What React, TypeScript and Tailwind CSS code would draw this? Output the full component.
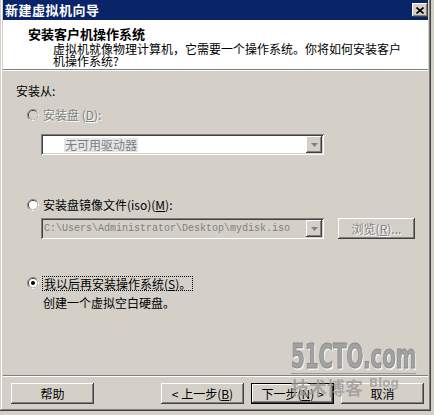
import React from "react";

const raised =
  "shadow-[inset_-1px_-1px_#404040,inset_1px_1px_#ffffff,inset_-2px_-2px_#808080,inset_2px_2px_#d4d0c8]";
const sunken =
  "shadow-[inset_1px_1px_#808080,inset_-1px_-1px_#ffffff,inset_2px_2px_#404040,inset_-2px_-2px_#d4d0c8]";

function Radio({ checked, disabled }: { checked?: boolean; disabled?: boolean }) {
  return (
    <svg width="12" height="12" viewBox="0 0 12 12" className="shrink-0">
      <circle cx="6" cy="6" r="5.5" fill="none" stroke="#808080" />
      <path d="M9.89 2.11 A5.5 5.5 0 0 1 2.11 9.89" fill="none" stroke="#ffffff" />
      <circle cx="6" cy="6" r="4.5" fill="none" stroke="#404040" />
      <path d="M9.18 2.82 A4.5 4.5 0 0 1 2.82 9.18" fill="none" stroke="#d4d0c8" />
      <circle cx="6" cy="6" r="4" fill={disabled ? "#d4d0c8" : "#ffffff"} />
      {checked && <circle cx="6" cy="6" r="2" fill="#000000" />}
    </svg>
  );
}

function Arrow({ disabled }: { disabled?: boolean }) {
  return (
    <div className={`w-[16px] h-[17px] bg-[#d4d0c8] flex items-center justify-center ${raised}`}>
      <svg width="7" height="4" viewBox="0 0 7 4">
        <path d="M0 0 H7 L3.5 4 Z" fill={disabled ? "#808080" : "#000000"} />
      </svg>
    </div>
  );
}

function Btn({ label, def, disabled }: { label: React.ReactNode; def?: boolean; disabled?: boolean }) {
  return (
    <div
      className={`w-[83px] h-[21px] bg-[#d4d0c8] flex items-center justify-center ${
        def ? "border border-black" : ""
      }`}
    >
      <div
        className={`w-full h-full flex items-center justify-center ${raised} ${
          disabled ? "text-[#808080] [text-shadow:1px_1px_0_#ffffff]" : "text-black"
        }`}
      >
        {label}
      </div>
    </div>
  );
}

export default function App() {
  return (
    <div className="w-[434px] h-[415px] bg-[#d4d0c8] relative overflow-hidden font-['Noto_Sans_CJK_SC',sans-serif] text-[12px] leading-[14px] text-black">
      <div
        className={`-mt-[3px] w-[431px] h-[414px] p-[3px] bg-[#d4d0c8] flex flex-col shadow-[inset_-1px_-1px_#404040,inset_1px_1px_#d4d0c8,inset_-2px_-2px_#808080,inset_2px_2px_#ffffff]`}
      >
        {/* title bar */}
        <div className="h-[20px] bg-[#0a246a] flex items-center justify-between pl-[2px] pr-[0px]">
          <span className="text-white font-bold text-[13px] leading-[16px] tracking-[0.5px]">新建虚拟机向导</span>
          <div className={`w-[16px] h-[14px] bg-[#d4d0c8] flex items-center justify-center ${raised}`}>
            <svg width="8" height="7" viewBox="0 0 8 7">
              <path d="M0.5 0.5 L7.5 6.5 M7.5 0.5 L0.5 6.5" stroke="#000" strokeWidth="1.6" />
            </svg>
          </div>
        </div>
        {/* header */}
        <div className="h-[49px] bg-white pl-[25px] pt-[6px]">
          <div className="font-bold text-[13px] leading-[15px]">安装客户机操作系统</div>
          <div className="pl-[25px] text-[12px] leading-[12px] mt-[2px] w-[380px]">
            虚拟机就像物理计算机，它需要一个操作系统。你将如何安装客户
            <br />
            机操作系统?
          </div>
        </div>
        <div className="h-[1px] bg-[#808080]" />
        <div className="h-[1px] bg-white" />
        {/* body */}
        <div className="h-[304px] flex flex-col pl-[13px]">
          <div className="mt-[13px] h-[14px]">安装从:</div>
          <div className="mt-[9px] h-[16px] flex items-center pl-[11px] gap-[4px] text-[#808080]">
            <Radio disabled />
            <span className="[text-shadow:1px_1px_0_#ffffff]">
              安装盘 (<span className="underline">D</span>):
            </span>
          </div>
          <div className={`mt-[11px] ml-[25px] w-[283px] h-[21px] bg-white flex items-center justify-between p-[2px] ${sunken}`}>
            <span className="ml-[21px] text-[#808080] bg-[#e6e6e6] px-[1px]">无可用驱动器</span>
            <Arrow disabled />
          </div>
          <div className="mt-[42px] h-[16px] flex items-center pl-[11px] gap-[4px]">
            <Radio />
            <span>
              安装盘镜像文件(iso)(<span className="underline">M</span>):
            </span>
          </div>
          <div className="mt-[5px] ml-[25px] flex items-center gap-[14px]">
            <div className={`w-[283px] h-[21px] bg-[#d4d0c8] flex items-center justify-between p-[2px] ${sunken}`}>
              <span className="ml-[1px] font-['Liberation_Mono',monospace] text-[10px] text-[#808080]">
                C:\Users\Administrator\Desktop\mydisk.iso
              </span>
              <Arrow disabled />
            </div>
            <div className={`w-[77px] h-[21px] bg-[#d4d0c8] flex items-center justify-center text-[#808080] [text-shadow:1px_1px_0_#ffffff] ${raised}`}>
              浏览(<span className="underline">R</span>)...
            </div>
          </div>
          <div className="mt-[36px] h-[16px] flex items-center pl-[11px] gap-[3px]">
            <Radio checked />
            <span className="border border-dotted border-black px-[1px] leading-[13px]">
              我以后再安装操作系统(<span className="underline">S</span>)。
            </span>
          </div>
          <div className="mt-[5px] pl-[27px] h-[14px]">创建一个虚拟空白硬盘。</div>
        </div>
        <div className="h-[1px] bg-[#808080]" />
        <div className="h-[1px] bg-white" />
        {/* footer */}
        <div className="flex-1 flex items-start justify-between pt-[6px] pl-[8px] pr-[4px]">
          <Btn label="帮助" />
          <div className="flex gap-[7px]">
            <Btn label={<span>&lt; 上一步(<span className="underline">B</span>)</span>} />
            <Btn def label={<span>下一步(<span className="underline">N</span>) &gt;</span>} />
            <Btn label="取消" />
          </div>
        </div>
      </div>
      {/* watermark */}
      <div className="absolute left-[291px] top-[341px] w-[125px] pointer-events-none">
        <div className="h-[32px] overflow-visible">
          <div className="origin-left scale-x-[0.6] whitespace-nowrap font-['DejaVu_Sans',sans-serif] font-bold text-[33px] leading-[32px] text-[#a2a2a2] [-webkit-text-stroke:1px_#8a8a8a] [text-shadow:2px_2px_0_#f2f2f2]">
            51CTO.com
          </div>
        </div>
        <div className="h-[1px] bg-[#9a9a9a] mt-[0px]" />
        <div className="flex items-start mt-[3px]">
          <span className="text-[18px] leading-[20px] font-bold text-[#9a9a9a] opacity-80">技术博客</span>
          <span className="ml-[6px] text-[12px] leading-[12px] font-bold text-[#a0a0a0] font-['DejaVu_Sans',sans-serif] opacity-80">
            Blog
          </span>
        </div>
      </div>
    </div>
  );
}
